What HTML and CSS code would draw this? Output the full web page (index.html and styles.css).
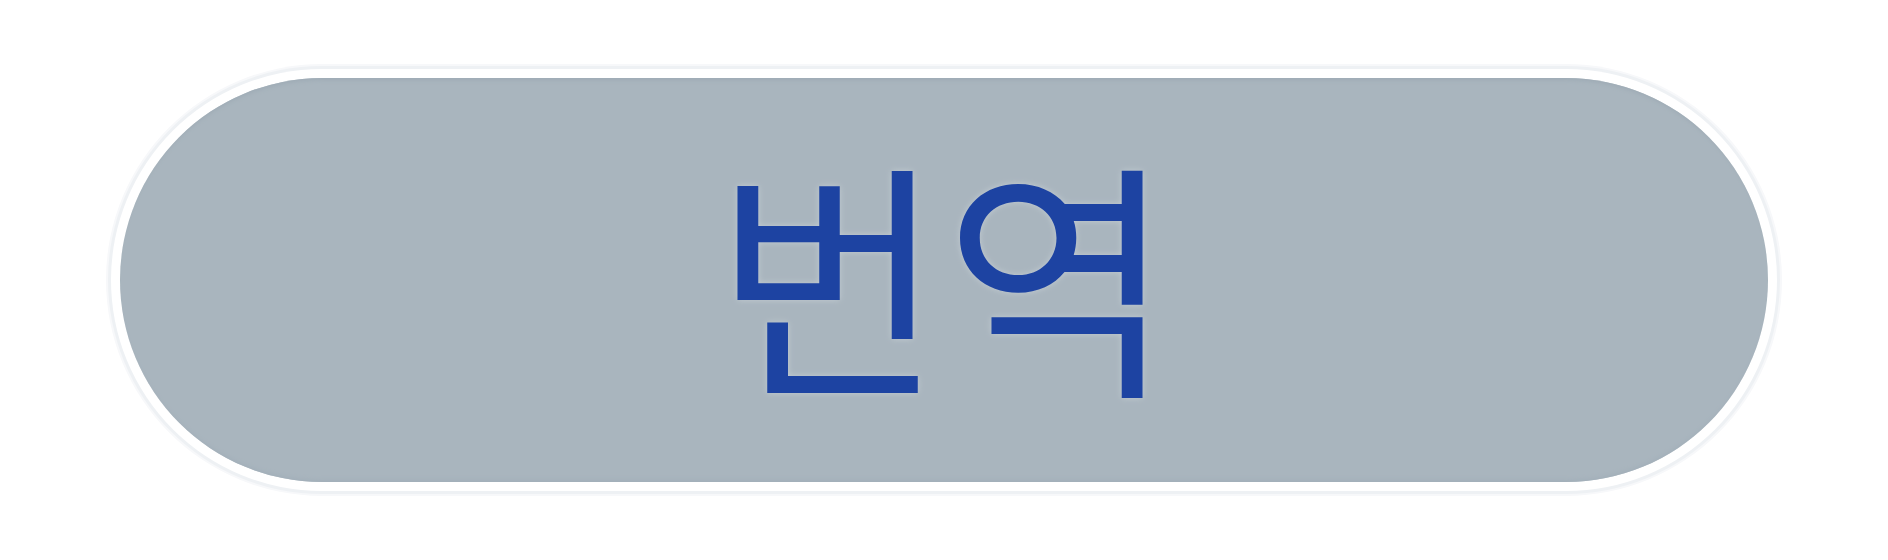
FILE: index.html
```html
<!DOCTYPE html>
<html lang="ko">
<head>
<meta charset="utf-8">
<title>번역</title>
<link rel="stylesheet" href="styles.css">
</head>
<body>
<main class="stage">
  <button class="pill" type="button"><span class="label">번역</span></button>
</main>
</body>
</html>
```
FILE: styles.css
```css
html, body {
  margin: 0;
  padding: 0;
  background: #ffffff;
}
.stage {
  width: 1888px;
  height: 560px;
  display: flex;
  align-items: center;
  justify-content: center;
}
.pill {
  width: 1648px;
  height: 404px;
  box-sizing: border-box;
  border: none;
  border-radius: 202px;
  background: #a9b5be;
  box-shadow:
    inset 0 6px 4px -4px #9eabb5,
    inset 0 -6px 4px -4px #a2afb9,
    0 0 0 9px #ffffff,
    0 0 0 12px #eef1f4,
    0 0 0 14px #f7f8fa;
  display: flex;
  align-items: center;
  justify-content: center;
  padding: 0 0 22px 0;
  cursor: pointer;
}
.label {
  font-family: "Noto Sans CJK KR", "Noto Sans", sans-serif;
  font-size: 250px;
  font-weight: 400;
  line-height: 1;
  color: #1d43a2;
  text-shadow: 0 0 6px #c3ccd3;
}
```
